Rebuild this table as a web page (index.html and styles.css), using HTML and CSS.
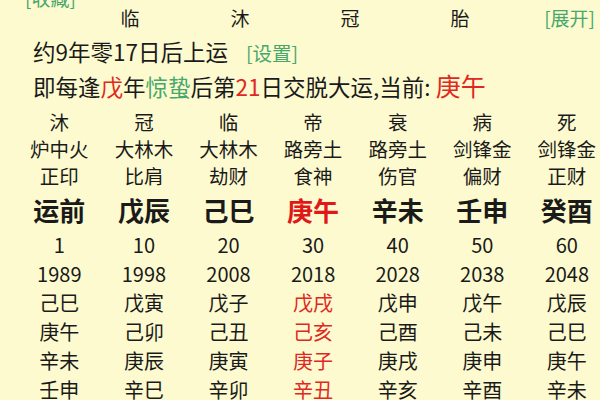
FILE: index.html
```html
<!DOCTYPE html>
<html lang="zh-CN">
<head>
<meta charset="utf-8">
<title>大运</title>
<link rel="stylesheet" href="styles.css">
</head>
<body>
<div class="page">
  <div class="fav"><span class="link">[收藏]</span></div>
  <div class="stages">
    <span class="stage">临</span>
    <span class="stage">沐</span>
    <span class="stage">冠</span>
    <span class="stage">胎</span>
    <span class="link expand">[展开]</span>
  </div>
  <div class="info">
    <p class="line">约9年零17日后上运 <span class="link set">[设置]</span></p>
    <p class="line">即每逢<span class="red">戊</span>年<span class="green">惊蛰</span>后第<span class="red">21</span>日交脱大运,当前: <span class="red now">庚午</span></p>
  </div>
  <div class="dayun">
    <div class="col">
      <span class="cell s">沐</span><span class="cell s">炉中火</span><span class="cell s">正印</span><span class="cell gz">运前</span>
      <span class="cell">1</span><span class="cell">1989</span><span class="cell">己巳</span><span class="cell">庚午</span><span class="cell">辛未</span><span class="cell">壬申</span>
    </div>
    <div class="col">
      <span class="cell s">冠</span><span class="cell s">大林木</span><span class="cell s">比肩</span><span class="cell gz">戊辰</span>
      <span class="cell">10</span><span class="cell">1998</span><span class="cell">戊寅</span><span class="cell">己卯</span><span class="cell">庚辰</span><span class="cell">辛巳</span>
    </div>
    <div class="col">
      <span class="cell s">临</span><span class="cell s">大林木</span><span class="cell s">劫财</span><span class="cell gz">己巳</span>
      <span class="cell">20</span><span class="cell">2008</span><span class="cell">戊子</span><span class="cell">己丑</span><span class="cell">庚寅</span><span class="cell">辛卯</span>
    </div>
    <div class="col current">
      <span class="cell s">帝</span><span class="cell s">路旁土</span><span class="cell s">食神</span><span class="cell gz hot">庚午</span>
      <span class="cell">30</span><span class="cell">2018</span><span class="cell hot">戊戌</span><span class="cell hot">己亥</span><span class="cell hot">庚子</span><span class="cell hot">辛丑</span>
    </div>
    <div class="col">
      <span class="cell s">衰</span><span class="cell s">路旁土</span><span class="cell s">伤官</span><span class="cell gz">辛未</span>
      <span class="cell">40</span><span class="cell">2028</span><span class="cell">戊申</span><span class="cell">己酉</span><span class="cell">庚戌</span><span class="cell">辛亥</span>
    </div>
    <div class="col">
      <span class="cell s">病</span><span class="cell s">剑锋金</span><span class="cell s">偏财</span><span class="cell gz">壬申</span>
      <span class="cell">50</span><span class="cell">2038</span><span class="cell">戊午</span><span class="cell">己未</span><span class="cell">庚申</span><span class="cell">辛酉</span>
    </div>
    <div class="col">
      <span class="cell s">死</span><span class="cell s">剑锋金</span><span class="cell s">正财</span><span class="cell gz">癸酉</span>
      <span class="cell">60</span><span class="cell">2048</span><span class="cell">戊辰</span><span class="cell">己巳</span><span class="cell">庚午</span><span class="cell">辛未</span>
    </div>
  </div>
</div>
</body>
</html>
```

FILE: styles.css
```css
html, body {
  margin: 0;
  padding: 0;
  background: #fdfad0;
  overflow: hidden;
}
body {
  width: 600px;
  height: 400px;
  font-family: "Noto Sans CJK SC", "Noto Sans", sans-serif;
  color: #1a1a1a;
}
.page {
  width: 600px;
}
.link {
  color: #47a86c;
}
.red { color: #e02822; }
.green { color: #47a86c; }

.fav {
  margin-top: -12px;
  height: 20px;
  line-height: 20px;
  padding-left: 25px;
  font-size: 19px;
}
.stages {
  display: grid;
  grid-template-columns: repeat(4, 110px) 1fr;
  padding-left: 75px;
  height: 20px;
  line-height: 20px;
  font-size: 19px;
}
.stage {
  text-align: center;
}
.expand {
  text-align: right;
  padding-right: 5px;
  font-size: 19px;
}
.info {
  margin-top: 6px;
  padding-left: 33px;
}
.line {
  margin: 0;
  height: 34px;
  line-height: 34px;
  font-size: 22.5px;
  white-space: nowrap;
}
.set {
  font-size: 19.5px;
  margin-left: 13px;
}
.now {
  font-size: 25px;
}
.dayun {
  display: grid;
  grid-template-columns: repeat(7, 84.6px);
  padding-left: 17px;
  padding-top: 6px;
  width: 620px;
}
.col {
  display: flex;
  flex-direction: column;
  align-items: center;
}
.cell {
  height: 29px;
  line-height: 29px;
  font-size: 20px;
  white-space: nowrap;
}
.cell.s {
  height: 27px;
  line-height: 27px;
  font-size: 19.5px;
}
.cell.gz {
  height: 41px;
  line-height: 41px;
  font-size: 26px;
  font-weight: 700;
}
.hot { color: #e02822; }
.cell.gz.hot { color: #e01818; }
```
